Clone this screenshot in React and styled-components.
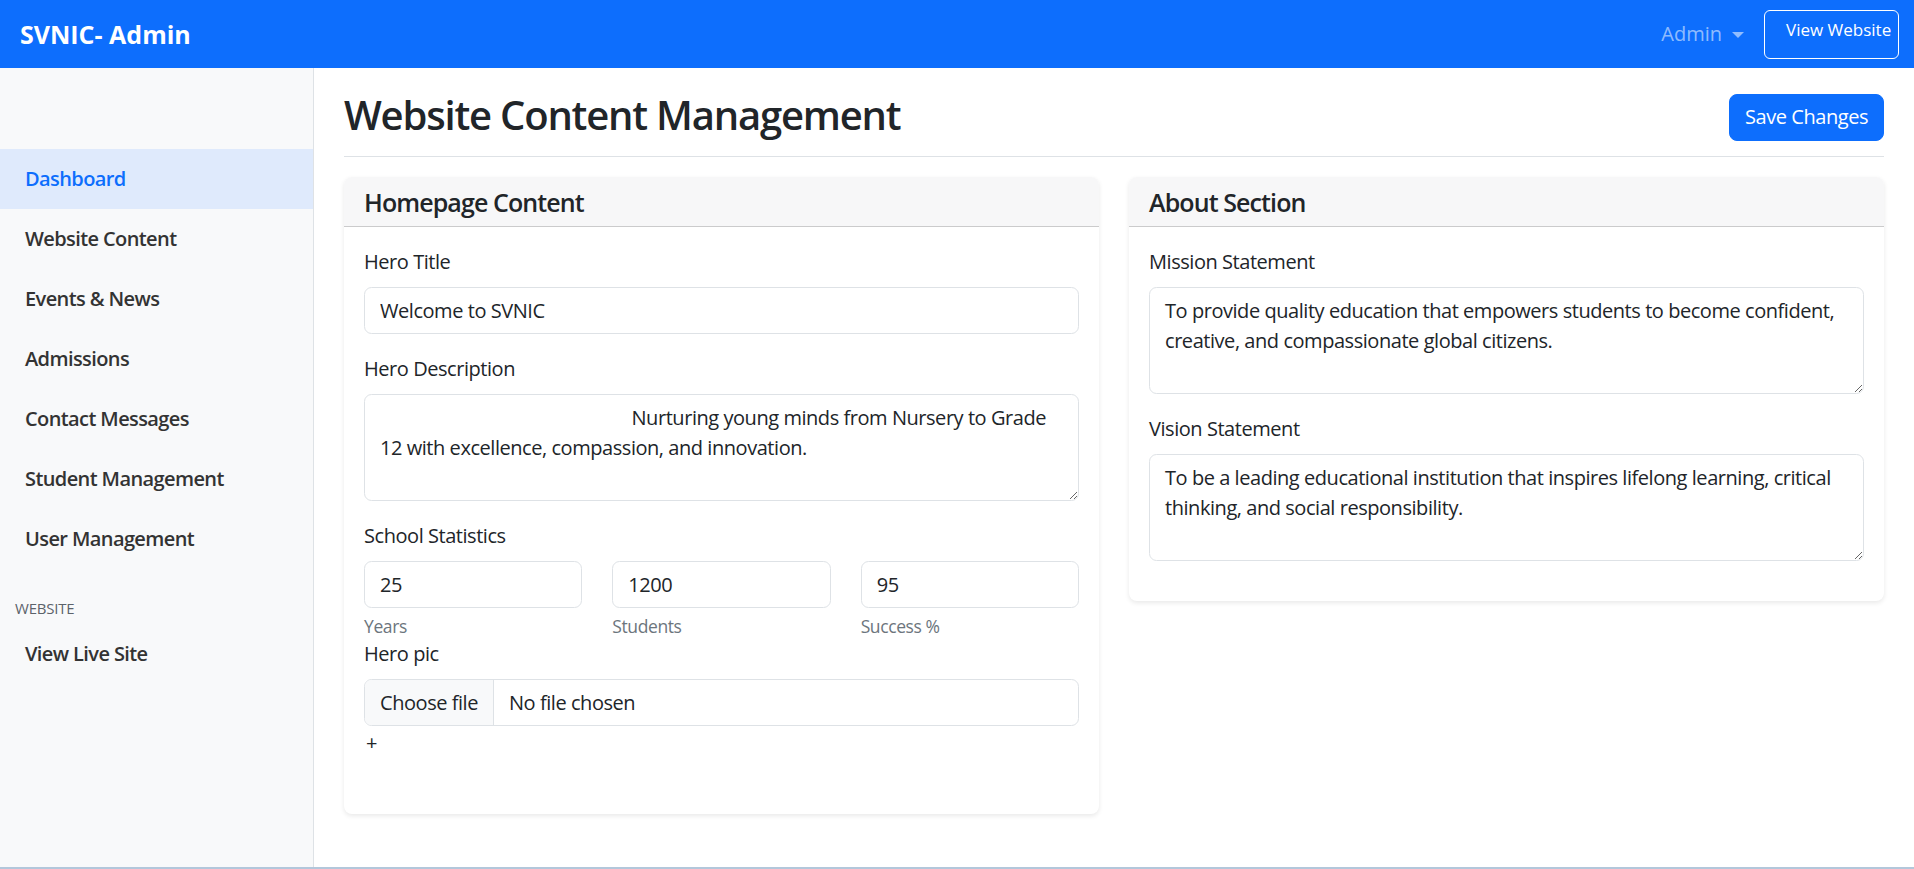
import React from "react";
import styled, { createGlobalStyle } from "styled-components";

const GlobalStyle = createGlobalStyle`
  *, *::before, *::after { box-sizing: border-box; }
  html, body { margin: 0; padding: 0; }
  body {
    font-family: "Open Sans", "Noto Sans", "Liberation Sans", sans-serif;
    font-size: 20px;
    line-height: 1.5;
    letter-spacing: -0.45px;
    color: #212529;
    background: #fff;
  }
`;

const Page = styled.div`
  height: 869px;
  display: flex;
  flex-direction: column;
  overflow: hidden;
`;

const Navbar = styled.header`
  flex: 0 0 68px;
  display: flex;
  align-items: center;
  padding: 0 15px 0 20px;
  background: #0d6efd;
  letter-spacing: 0;
`;

const Brand = styled.a`
  font-size: 25px;
  font-weight: 700;
  color: #fff;
  text-decoration: none;
  line-height: 1.2;
`;

const NavRight = styled.div`
  margin-left: auto;
  display: flex;
  align-items: center;
  gap: 20px;
`;

const UserToggle = styled.span`
  display: inline-flex;
  align-items: center;
  gap: 10px;
  color: rgba(255, 255, 255, 0.55);
  font-size: 20px;
`;

const Caret = styled.span`
  width: 0;
  height: 0;
  border-left: 6px solid transparent;
  border-right: 6px solid transparent;
  border-top: 6px solid rgba(255, 255, 255, 0.55);
  margin-top: 2px;
`;

const OutlineButton = styled.button`
  width: 135px;
  height: 49px;
  display: flex;
  align-items: flex-start;
  padding: 6px 8px 0 21px;
  border: 1px solid #fff;
  border-radius: 6px;
  background: transparent;
  color: #fff;
  font-family: inherit;
  font-size: 17px;
  line-height: 26px;
  letter-spacing: 0;
  white-space: nowrap;
`;

const Body = styled.div`
  flex: 1;
  display: flex;
  min-height: 0;
`;

const Sidebar = styled.nav`
  flex: 0 0 314px;
  background: #f8f9fa;
  border-right: 1px solid #dee2e6;
  padding-top: 81px;
  display: flex;
  flex-direction: column;
`;

const NavLink = styled.a`
  display: block;
  padding: 15px 25px;
  line-height: 30px;
  font-size: 20px;
  font-weight: 600;
  letter-spacing: -0.6px;
  text-decoration: none;
  color: ${(p) => (p.$active ? "#0d6efd" : "#333")};
  background: ${(p) => (p.$active ? "#dfeafc" : "transparent")};
`;

const SidebarHeading = styled.h6`
  margin: 28px 0 5px;
  padding: 0 15px;
  font-size: 15px;
  line-height: 22px;
  font-weight: 400;
  letter-spacing: -0.2px;
  text-transform: uppercase;
  color: #5c636a;
`;

const Main = styled.main`
  flex: 1;
  padding: 0 30px;
`;

const PageHeader = styled.div`
  display: flex;
  align-items: center;
  justify-content: space-between;
  padding-top: 20px;
  padding-bottom: 10px;
  margin-bottom: 20px;
  border-bottom: 1px solid #dee2e6;
`;

const Title = styled.h1`
  margin: 0 0 10px;
  padding-top: 3px;
  height: 48px;
  font-size: 40px;
  line-height: 48px;
  font-weight: 600;
  letter-spacing: -1.2px;
`;

const PrimaryButton = styled.button`
  height: 47px;
  padding: 0 15px;
  border: 1px solid #0d6efd;
  border-radius: 8px;
  background: #0d6efd;
  color: #fff;
  font-family: inherit;
  font-size: 20px;
  line-height: 30px;
  letter-spacing: -0.45px;
`;

const CardGrid = styled.div`
  display: grid;
  grid-template-columns: 1fr 1fr;
  gap: 30px;
  align-items: start;
`;

const Card = styled.section`
  background: #fff;
  border-radius: 8px;
  box-shadow: 0 2px 5px rgba(0, 0, 0, 0.09);
  overflow: hidden;
`;

const CardHeader = styled.div`
  padding: 9.5px 20px;
  background: #f7f7f8;
  border-bottom: 1px solid rgba(0, 0, 0, 0.175);
`;

const CardTitle = styled.h5`
  margin: 0;
  font-size: 25px;
  line-height: 30px;
  font-weight: 600;
  letter-spacing: -0.9px;
`;

const CardBody = styled.div`
  padding: 20px;
`;

const Group = styled.div`
  margin-bottom: ${(p) => (p.$mb != null ? p.$mb : 20)}px;
`;

const Label = styled.label`
  display: block;
  margin-bottom: 10px;
  font-size: 20px;
  line-height: 30px;
`;

const fieldBase = `
  display: block;
  width: 100%;
  padding: 7.5px 15px;
  font-family: inherit;
  font-size: 20px;
  line-height: 30px;
  letter-spacing: -0.45px;
  color: #212529;
  background: #fff;
  border: 1px solid #dee2e6;
  border-radius: 7.5px;
  outline: none;
`;

const Input = styled.input`
  ${fieldBase}
  height: 47px;
`;

const TextArea = styled.textarea`
  ${fieldBase}
  height: 107px;
  resize: vertical;
  white-space: pre-wrap;
`;

const StatsRow = styled.div`
  display: grid;
  grid-template-columns: repeat(3, 1fr);
  gap: 30px;
`;

const Hint = styled.small`
  display: block;
  margin-top: 5px;
  font-size: 17.5px;
  line-height: 26px;
  letter-spacing: -0.4px;
  color: #6c757d;
`;

const FileBox = styled.div`
  display: flex;
  height: 47px;
  border: 1px solid #dee2e6;
  border-radius: 7.5px;
  overflow: hidden;
`;

const FileButton = styled.span`
  display: flex;
  align-items: center;
  padding: 0 15px;
  background: #f8f9fa;
  border-right: 1px solid #dee2e6;
  font-size: 20px;
`;

const FileName = styled.span`
  display: flex;
  align-items: center;
  padding: 0 15px;
  font-size: 20px;
`;

const PlusHint = styled.div`
  margin: 2px 0 36px 2px;
  font-size: 20px;
  line-height: 30px;
`;

const BottomLine = styled.div`
  flex: 0 0 2px;
  background: #b3c7db;
`;

const navItems = [
  "Dashboard",
  "Website Content",
  "Events & News",
  "Admissions",
  "Contact Messages",
  "Student Management",
  "User Management",
];

const stats = [
  { value: "25", hint: "Years" },
  { value: "1200", hint: "Students" },
  { value: "95", hint: "Success %" },
];

const heroDescription =
  " ".repeat(53) +
  "Nurturing young minds from Nursery to Grade 12 with excellence, compassion, and innovation.";

export default function App() {
  return (
    <>
      <GlobalStyle />
      <Page>
        <Navbar>
          <Brand href="#">SVNIC- Admin</Brand>
          <NavRight>
            <UserToggle>
              Admin <Caret />
            </UserToggle>
            <OutlineButton>View Website</OutlineButton>
          </NavRight>
        </Navbar>
        <Body>
          <Sidebar>
            {navItems.map((item, i) => (
              <NavLink key={item} href="#" $active={i === 0}>
                {item}
              </NavLink>
            ))}
            <SidebarHeading>Website</SidebarHeading>
            <NavLink href="#">View Live Site</NavLink>
          </Sidebar>
          <Main>
            <PageHeader>
              <Title>Website Content Management</Title>
              <PrimaryButton>Save Changes</PrimaryButton>
            </PageHeader>
            <CardGrid>
              <Card>
                <CardHeader>
                  <CardTitle>Homepage Content</CardTitle>
                </CardHeader>
                <CardBody>
                  <Group>
                    <Label>Hero Title</Label>
                    <Input defaultValue="Welcome to SVNIC" />
                  </Group>
                  <Group>
                    <Label>Hero Description</Label>
                    <TextArea rows={3} defaultValue={heroDescription} />
                  </Group>
                  <Group $mb={0}>
                    <Label>School Statistics</Label>
                    <StatsRow>
                      {stats.map((s) => (
                        <div key={s.hint}>
                          <Input defaultValue={s.value} />
                          <Hint>{s.hint}</Hint>
                        </div>
                      ))}
                    </StatsRow>
                  </Group>
                  <Group $mb={0}>
                    <Label>Hero pic</Label>
                    <FileBox>
                      <FileButton>Choose file</FileButton>
                      <FileName>No file chosen</FileName>
                    </FileBox>
                    <PlusHint>+</PlusHint>
                  </Group>
                </CardBody>
              </Card>
              <Card>
                <CardHeader>
                  <CardTitle>About Section</CardTitle>
                </CardHeader>
                <CardBody>
                  <Group>
                    <Label>Mission Statement</Label>
                    <TextArea
                      rows={3}
                      defaultValue="To provide quality education that empowers students to become confident, creative, and compassionate global citizens."
                    />
                  </Group>
                  <Group>
                    <Label>Vision Statement</Label>
                    <TextArea
                      rows={3}
                      defaultValue="To be a leading educational institution that inspires lifelong learning, critical thinking, and social responsibility."
                    />
                  </Group>
                </CardBody>
              </Card>
            </CardGrid>
          </Main>
        </Body>
        <BottomLine />
      </Page>
    </>
  );
}
